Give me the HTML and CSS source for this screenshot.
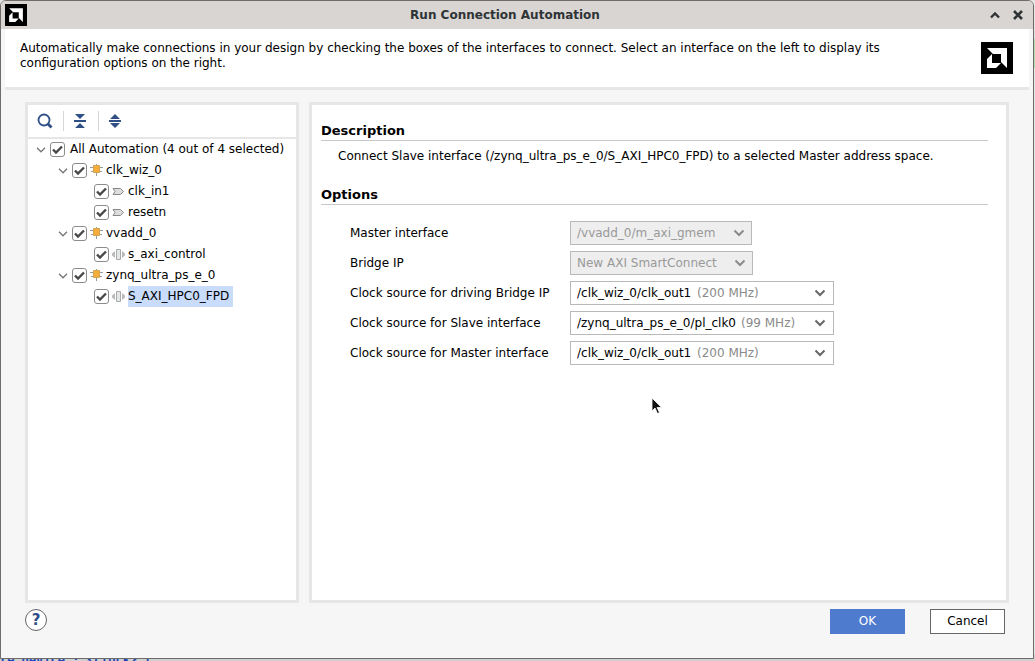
FILE: index.html
```html
<!DOCTYPE html>
<html lang="en">
<head>
<meta charset="utf-8">
<title>Run Connection Automation</title>
<link rel="stylesheet" href="styles.css">
</head>
<body>
<svg class="defs" aria-hidden="true">
  <symbol id="logo" viewBox="0 0 32 32">
    <path fill="#000" d="M0 0h32v32H0z"/>
    <path fill="#fff" d="M6 6h20v20l-6-6v-8h-8z"/>
    <path fill="#fff" d="M11 12v9h9l-5 5H6v-9z"/>
  </symbol>
  <symbol id="chip" viewBox="0 0 13 13">
    <path stroke="#999" fill="none" d="M0 3.500h13M1 7.500h11M6.500 0v12"/>
    <path fill="#f5ae38" stroke="#d3a456" d="M3.500 1.500h6v7h-6z"/>
  </symbol>
  <symbol id="port" viewBox="0 0 13 13">
    <path fill="#ddd" stroke="#888" d="M1 3.500h7.500l3 3-3 3H1l2-3z"/>
  </symbol>
  <symbol id="bus" viewBox="0 0 13 13">
    <path fill="#bbb" d="M3 3v7L0 7.500v-2zM10 3v7l3-2.500v-2z"/>
    <path fill="#e4e8e4" stroke="#aaa" d="M4.500 1.500h4v10h-4z"/>
  </symbol>
  <symbol id="chevron" viewBox="0 0 12 8">
    <path fill="none" stroke="currentColor" stroke-width="2" d="M1.500 1.500L6 6l4.500-4.500"/>
  </symbol>
  <symbol id="twisty" viewBox="0 0 10 6">
    <path fill="none" stroke="#777" stroke-width="1.300" d="M1 .8l4 4 4-4"/>
  </symbol>
</svg>

<div class="console" aria-hidden="true">re device : {clock} (</div>

<div class="window">
  <header class="titlebar">
    <svg class="app-icon"><use href="#logo"/></svg>
    <h1 class="title">Run Connection Automation</h1>
    <button class="win-button" aria-label="Shade"><svg width="12" height="12" viewBox="0 0 12 12"><path fill="none" stroke="#2e3436" stroke-width="2.400" d="M2 8.500l4-4 4 4"/></svg></button>
    <button class="win-button" aria-label="Close"><svg width="12" height="12" viewBox="0 0 12 12"><path fill="none" stroke="#2e3436" stroke-width="2.600" d="M2 2l8 8M10 2l-8 8"/></svg></button>
  </header>

  <section class="intro">
    <p class="intro-text">Automatically make connections in your design by checking the boxes of the interfaces to connect. Select an interface on the left to display its configuration options on the right.</p>
    <svg class="brand"><use href="#logo"/></svg>
  </section>

  <main class="panels">
    <section class="panel tree-panel">
      <div class="toolbar">
        <button class="tool" aria-label="Search"><svg width="16" height="16" viewBox="0 0 16 16"><circle cx="7" cy="7" r="5.500" fill="none" stroke="#2f4f86" stroke-width="1.800"/><path stroke="#2f4f86" stroke-width="2.800" d="M10.500 10.500l4 4"/></svg></button>
        <button class="tool" aria-label="Collapse All"><svg width="14" height="16" viewBox="0 0 14 16"><path fill="#2f4f86" d="M2 1h10L7 6zM1 7h12v2H1zM7 10l5 5H2z"/></svg></button>
        <button class="tool" aria-label="Expand All"><svg width="14" height="16" viewBox="0 0 14 16"><path fill="#2f4f86" d="M7 1l5 5H2zM1 7h12v2H1zM2 10h10l-5 5z"/></svg></button>
      </div>
      <ul class="tree">
        <li>
          <div class="node"><svg class="twisty"><use href="#twisty"/></svg><input type="checkbox" id="all" checked><label class="root" for="all">All Automation (4 out of 4 selected)</label></div>
          <ul>
            <li>
              <div class="node"><svg class="twisty"><use href="#twisty"/></svg><input type="checkbox" id="clk" checked><svg class="kind"><use href="#chip"/></svg><label for="clk">clk_wiz_0</label></div>
              <ul>
                <li class="node leaf"><input type="checkbox" id="clkin" checked><svg class="kind"><use href="#port"/></svg><label for="clkin">clk_in1</label></li>
                <li class="node leaf"><input type="checkbox" id="resetn" checked><svg class="kind"><use href="#port"/></svg><label for="resetn">resetn</label></li>
              </ul>
            </li>
            <li>
              <div class="node"><svg class="twisty"><use href="#twisty"/></svg><input type="checkbox" id="vvadd" checked><svg class="kind"><use href="#chip"/></svg><label for="vvadd">vvadd_0</label></div>
              <ul>
                <li class="node leaf"><input type="checkbox" id="saxi" checked><svg class="kind"><use href="#bus"/></svg><label for="saxi">s_axi_control</label></li>
              </ul>
            </li>
            <li>
              <div class="node"><svg class="twisty"><use href="#twisty"/></svg><input type="checkbox" id="zynq" checked><svg class="kind"><use href="#chip"/></svg><label for="zynq">zynq_ultra_ps_e_0</label></div>
              <ul>
                <li class="node leaf"><input type="checkbox" id="hpc" checked><svg class="kind"><use href="#bus"/></svg><label class="selected" for="hpc">S_AXI_HPC0_FPD</label></li>
              </ul>
            </li>
          </ul>
        </li>
      </ul>
    </section>

    <section class="panel detail-panel">
      <h2 class="heading">Description</h2>
      <p class="description">Connect Slave interface (/zynq_ultra_ps_e_0/S_AXI_HPC0_FPD) to a selected Master address space.</p>
      <h2 class="heading">Options</h2>
      <form class="options">
        <label for="master">Master interface</label>
        <div class="combo disabled"><select id="master" disabled><option>/vvadd_0/m_axi_gmem</option></select><svg class="arrow"><use href="#chevron"/></svg></div>
        <label for="bridge">Bridge IP</label>
        <div class="combo disabled"><select id="bridge" disabled><option>New AXI SmartConnect</option></select><svg class="arrow"><use href="#chevron"/></svg></div>
        <label for="src-bridge">Clock source for driving Bridge IP</label>
        <div class="combo wide"><select id="src-bridge"><option>/clk_wiz_0/clk_out1</option></select><span class="rate">(200 MHz)</span><svg class="arrow"><use href="#chevron"/></svg></div>
        <label for="src-slave">Clock source for Slave interface</label>
        <div class="combo wide"><select id="src-slave"><option>/zynq_ultra_ps_e_0/pl_clk0</option></select><span class="rate">(99 MHz)</span><svg class="arrow"><use href="#chevron"/></svg></div>
        <label for="src-master">Clock source for Master interface</label>
        <div class="combo wide"><select id="src-master"><option>/clk_wiz_0/clk_out1</option></select><span class="rate">(200 MHz)</span><svg class="arrow"><use href="#chevron"/></svg></div>
      </form>
    </section>
  </main>

  <footer class="actions">
    <button class="help" aria-label="Help">?</button>
    <button class="button primary">OK</button>
    <button class="button">Cancel</button>
  </footer>
</div>

<svg class="pointer" viewBox="0 0 12 18" aria-hidden="true"><path fill="#111" stroke="#fff" stroke-width=".8" d="M1 1v13l3-3 2.500 5.500 2-1L6 10.500h4.500z"/></svg>
</body>
</html>
```

FILE: styles.css
```css
* { box-sizing: border-box; }

body {
  margin: 0;
  height: 100vh;
  padding: 0 1px 2px 0;
  display: flex;
  background: linear-gradient(#e4e4e4 39px, #a8e4a8 39px 68px, #e4e8ea 68px 655px, #d0d0d0 655px);
  color: #000;
  font: 12px/15px "DejaVu Sans", sans-serif;
}

h1, h2, p, ul { margin: 0; padding: 0; font-size: inherit; }
ul { list-style: none; }
button, select { font: inherit; color: inherit; }
svg { flex: none; }
.defs { position: absolute; width: 0; height: 0; }

/* Sliver of the console line that shows below the dialog */
.console {
  position: absolute;
  left: 0;
  bottom: 0;
  display: flex;
  align-items: center;
  height: 2px;
  overflow: hidden;
  color: #2348b4;
  font: bold 12px/15px "DejaVu Sans Mono", monospace;
}

.window {
  flex: 1;
  display: flex;
  flex-direction: column;
  border: 1px solid #6f6b69;
  border-radius: 6px 6px 0 0;
  background: #f6f6f6;
  overflow: hidden;
}

.titlebar {
  display: flex;
  align-items: center;
  height: 28px;
  padding: 0 4px;
  background: #d9d5d2;
}
.app-icon { width: 22px; height: 22px; }
.title { flex: 1; text-align: center; color: #2e3436; }
.win-button {
  display: grid;
  place-items: center;
  width: 23px;
  height: 22px;
  padding: 0;
  border: 0;
  background: none;
}

.intro {
  display: flex;
  justify-content: space-between;
  gap: 32px;
  height: 61px;
  margin: 0 4px;
  padding: 12px 16px 0 15px;
  background: #fff;
  border-bottom: 3px solid #e6e6e6;
}
.intro-text { max-width: 910px; }
.brand { width: 32px; height: 32px; margin-top: 1px; }

.panels {
  flex: 1;
  display: flex;
  gap: 10px;
  padding: 12px 24px 0;
}
.panel { border: 3px solid #e6e6e6; background: #fff; }
.tree-panel { width: 274px; }
.detail-panel { flex: 1; padding: 18px 18px 0 9px; }

.toolbar {
  display: flex;
  align-items: center;
  height: 34px;
  border-bottom: 2px solid #e6e6e6;
}
.tool {
  display: grid;
  place-items: center;
  width: 35px;
  height: 20px;
  padding: 0 1px 0 0;
  border: 0;
  background: none;
}
.tool + .tool { padding: 0 2px 0 0; border-left: 1px solid #d6d6d6; }

.tree { padding-left: 8px; }
.tree ul { padding-left: 22px; }
.node { display: flex; align-items: center; height: 21px; white-space: nowrap; }
.leaf { padding-left: 14px; }
.twisty { width: 10px; height: 6px; margin-right: 4px; }
.kind { width: 13px; height: 13px; margin: 0 3px; }
.node input {
  appearance: none;
  flex: none;
  width: 15px;
  height: 15px;
  margin: 0;
  border: 1px solid #8c8c8c;
  border-radius: 3px;
  background: #fff url("data:image/svg+xml,%3Csvg xmlns='http://www.w3.org/2000/svg' viewBox='0 0 13 13'%3E%3Cpath d='M2 6.500l3 3 6-6' fill='none' stroke='%23484848' stroke-width='2.400'/%3E%3C/svg%3E");
}
.node label { padding-right: 4px; line-height: 21px; }
.root { margin-left: 5px; }
.selected { background: #c9dcfc; }

.heading {
  padding-bottom: 2px;
  border-bottom: 1px solid #c8c8c8;
  font-size: 13px;
}
.description { padding: 8px 17px 23px; }

.options {
  display: grid;
  grid-template-columns: 220px 1fr;
  grid-auto-rows: 24px;
  row-gap: 6px;
  align-items: center;
  padding: 16px 0 0 29px;
}
.combo {
  display: flex;
  align-items: center;
  width: max-content;
  height: 24px;
  padding: 0 6px;
  border: 1px solid #b9b9b9;
  background: #fff;
}
.combo select {
  appearance: none;
  padding: 0;
  border: 0;
  background: none;
  opacity: 1;
}
.rate { margin-left: 5px; color: #8a8a8a; }
.arrow { width: 12px; height: 8px; margin-left: auto; color: #666; }
.wide { width: 264px; padding-right: 7px; }
.disabled { gap: 17px; background: #eee; color: #999; }
.disabled .arrow { color: #8c8c8c; }

.actions {
  display: flex;
  gap: 25px;
  height: 55px;
  padding: 6px 28px 0 24px;
}
.help {
  width: 22px;
  height: 22px;
  margin-right: auto;
  padding: 0;
  border: 1px solid #666;
  border-radius: 50%;
  background: #fff;
  color: #2f4f86;
  font-size: 15px;
  font-weight: bold;
}
.button {
  width: 75px;
  height: 25px;
  padding: 0;
  border: 1px solid #666;
  background: #fff;
}
.primary { border-color: #4f7bcf; background: #4f7bcf; color: #fff; }

.pointer { position: absolute; left: 651px; top: 397px; width: 12px; height: 18px; }
```
